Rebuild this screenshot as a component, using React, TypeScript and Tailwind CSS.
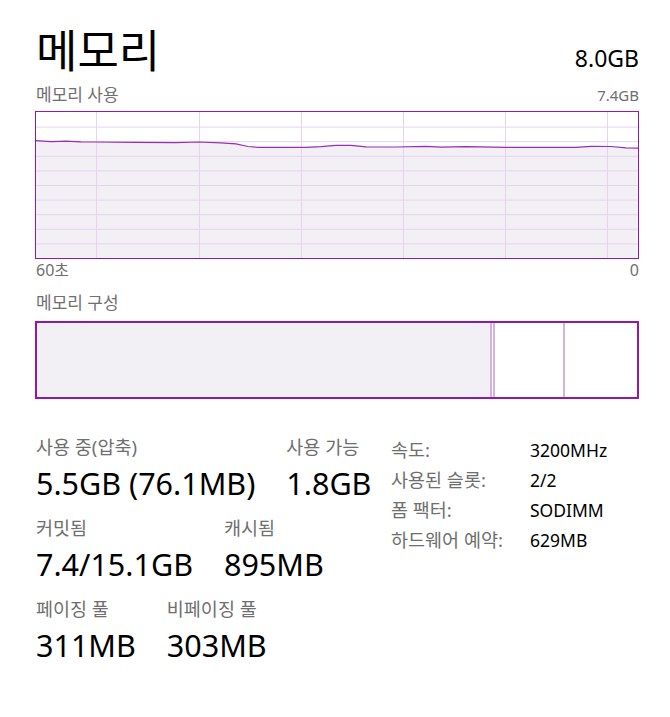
import React from "react";

const font = { fontFamily: '"Noto Sans", "Noto Sans CJK KR", sans-serif' };

const linePts: [number, number][] = [
  [0, 28.7], [15, 29.6], [30, 29.2], [45, 29.8], [60, 30.0], [100, 30.4], [140, 30.6],
  [163, 30.0], [185, 30.8], [200, 31.8], [212, 34.5], [222, 35.3], [270, 35.3],
  [285, 34.6], [300, 33.3], [315, 33.4], [330, 34.8], [360, 35.0], [390, 34.3],
  [405, 35.2], [430, 34.6], [470, 35.3], [540, 35.3], [555, 34.3], [575, 34.5],
  [590, 35.9], [602, 36.2],
];

function Graph() {
  const W = 602;
  const H = 146;
  const d = linePts.map((p, i) => `${i ? "L" : "M"}${p[0]} ${p[1]}`).join(" ");
  const area = `${d} L${W} ${H} L0 ${H} Z`;
  const vx = [60, 163, 265, 367, 469, 571];
  return (
    <svg viewBox={`0 0 ${W} ${H}`} width={W} height={H} className="block">
      <rect x="0" y="0" width={W} height={H} fill="#ffffff" />
      <path d={area} fill="#f2f0f4" />
      {Array.from({ length: 9 }).map((_, i) => (
        <line key={i} x1="0" x2={W} y1={14.6 * (i + 1) + 0.5} y2={14.6 * (i + 1) + 0.5} stroke="#e6d3ee" strokeWidth="1" />
      ))}
      {vx.map((x) => (
        <line key={x} x1={x + 0.5} x2={x + 0.5} y1="0" y2={H} stroke="#e6d3ee" strokeWidth="1" />
      ))}
      <path d={d} fill="none" stroke="#9a2cb8" strokeWidth="1.2" />
    </svg>
  );
}

function Stat({ label, value }: { label: string; value: string }) {
  return (
    <div className="flex flex-col h-[81px] pl-[1px]">
      <span className="text-[18.5px] leading-[30px] text-[#6f6f6f] whitespace-nowrap">{label}</span>
      <span className="text-[30.5px] leading-[42px] text-black whitespace-nowrap">{value}</span>
    </div>
  );
}

export default function App() {
  return (
    <div className="w-[670px] h-[717px] bg-white pl-[35px] pr-[31px] overflow-hidden" style={font}>
      <div className="flex justify-between items-start h-[78px]">
        <div className="text-[45px] leading-[50px] text-black pl-[1px] mt-[26px] whitespace-nowrap">메모리</div>
        <div className="text-[23px] leading-[30px] text-black mt-[43px]">8.0GB</div>
      </div>
      <div className="flex justify-between items-baseline leading-[20px] text-[#6f6f6f] h-[33px] pt-[7px]">
        <span className="pl-[1px] text-[17px]">메모리 사용</span>
        <span className="text-[15px]">7.4GB</span>
      </div>
      <div className="w-[604px] h-[148px] border border-[#8b1aad]">
        <Graph />
      </div>
      <div className="flex justify-between text-[16px] leading-[20px] text-[#6f6f6f] h-[22px] pt-[1px] pl-[1px]">
        <span>60초</span>
        <span>0</span>
      </div>
      <div className="text-[17px] leading-[20px] text-[#6f6f6f] pt-[12px] h-[40px] pl-[1px]">메모리 구성</div>
      <div className="w-[604px] h-[78px] border-2 border-[#8b1aad] flex">
        <div className="w-[453px] bg-[#f2f0f4]" />
        <div className="w-[5px] border-x-2 border-[#d4b4dc]" />
        <div className="w-[68px]" />
        <div className="w-[2px] bg-[#d4b4dc]" />
        <div className="flex-1" />
      </div>
      <div className="flex items-start pt-[33px]">
        <div className="w-[356px] shrink-0 flex flex-col">
          <div className="flex gap-[30px]">
            <Stat label="사용 중(압축)" value="5.5GB (76.1MB)" />
            <Stat label="사용 가능" value="1.8GB" />
          </div>
          <div className="flex gap-[30px]">
            <Stat label="커밋됨" value="7.4/15.1GB" />
            <Stat label="캐시됨" value="895MB" />
          </div>
          <div className="flex gap-[30px]">
            <Stat label="페이징 풀" value="311MB" />
            <Stat label="비페이징 풀" value="303MB" />
          </div>
        </div>
        <div className="grid grid-cols-[139px_auto] content-start leading-[30px] pt-[3px]">
          <span className="text-[18.5px] text-[#6f6f6f]">속도:</span>
          <span className="text-[17.5px] text-black">3200MHz</span>
          <span className="text-[18.5px] text-[#6f6f6f]">사용된 슬롯:</span>
          <span className="text-[17.5px] text-black">2/2</span>
          <span className="text-[18.5px] text-[#6f6f6f]">폼 팩터:</span>
          <span className="text-[17.5px] text-black">SODIMM</span>
          <span className="text-[18.5px] text-[#6f6f6f]">하드웨어 예약:</span>
          <span className="text-[17.5px] text-black">629MB</span>
        </div>
      </div>
    </div>
  );
}
